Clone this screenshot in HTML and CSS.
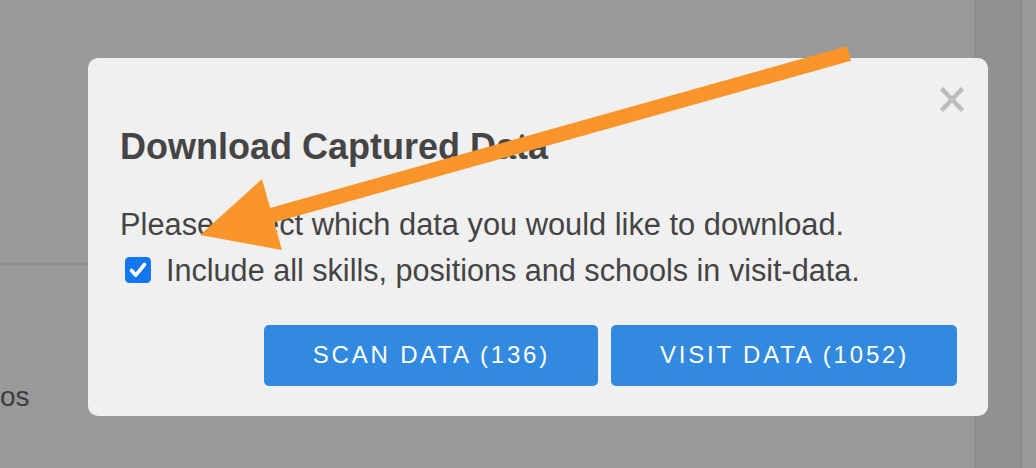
FILE: index.html
```html
<!DOCTYPE html>
<html lang="en">
<head>
<meta charset="utf-8">
<title>Download Captured Data</title>
<link rel="stylesheet" href="styles.css">
</head>
<body>
  <div class="page">
    <div class="main">
      <div class="main-top"></div>
      <div class="main-row"><span class="row-text">os</span></div>
    </div>
    <div class="side"></div>
    <div class="edge"></div>
  </div>

  <div class="overlay">
    <div class="modal" role="dialog">
      <button class="close" aria-label="Close">
        <svg width="26" height="27" viewBox="0 0 26 27"><path d="M2.5 2.5 L23.5 24.5 M23.5 2.5 L2.5 24.5" stroke="#bdbdbd" stroke-width="4.6" fill="none"/></svg>
      </button>
      <h2 class="title">Download Captured Data</h2>
      <p class="lead">Please select which data you would like to download.</p>
      <label class="check">
        <span class="box">
          <svg width="26" height="26" viewBox="0 0 26 26"><rect x="0" y="0" width="26" height="26" rx="4.5" fill="#1276f0"/><path d="M6.5 13.5 L10.8 18.2 L19.5 7.5" stroke="#fff" stroke-width="3.6" fill="none" stroke-linecap="round" stroke-linejoin="round"/></svg>
        </span>
        <span class="check-text">Include all skills, positions and schools in visit-data.</span>
      </label>
      <div class="actions">
        <button class="btn">SCAN DATA (136)</button>
        <button class="btn">VISIT DATA (1052)</button>
      </div>
    </div>
  </div>

  <svg class="annot" width="1036" height="468" viewBox="0 0 1036 468">
    <line x1="849" y1="53.5" x2="262" y2="218" stroke="#f9952a" stroke-width="15"/>
    <polygon points="200,235 262,179 282,250" fill="#f9952a"/>
  </svg>
</body>
</html>
```
FILE: styles.css
```css
html, body {
  margin: 0;
  padding: 0;
  width: 1036px;
  height: 468px;
  overflow: hidden;
  background: #999999;
  font-family: "Liberation Sans", Arial, sans-serif;
}

.page {
  display: flex;
  height: 468px;
}

.main {
  width: 974px;
  border-right: 2px solid #8d8d8d;
  background: #999999;
}

.main-top {
  height: 263px;
  border-bottom: 2px solid #8f8f8f;
}

.main-row {
  padding-top: 115px;
  font-size: 28px;
  line-height: 34px;
  color: #3d3d3d;
}

.row-text {
  margin-left: 0;
}

.side {
  width: 44px;
  background: #929190;
  border-right: 2px solid #8b8b8b;
}

.edge {
  flex: 1;
  background: #999999;
}

.overlay {
  position: fixed;
  inset: 0;
  padding: 58px 0 0 88px;
}

.modal {
  position: relative;
  box-sizing: border-box;
  width: 900px;
  height: 358px;
  background: #f0f0f0;
  border-radius: 10px;
  padding: 71px 31px 30px 32px;
  color: #444444;
}

.close {
  position: absolute;
  left: 851px;
  top: 28px;
  padding: 0;
  margin: 0;
  border: 0;
  background: none;
  width: 26px;
  height: 27px;
  display: block;
}

.close svg {
  display: block;
}

.title {
  margin: 0;
  font-size: 36px;
  line-height: 36px;
  font-weight: bold;
  color: #454545;
}

.lead {
  margin: 41.5px 0 0 0;
  font-size: 30.8px;
  line-height: 36px;
}

.check {
  margin-top: 9px;
  display: flex;
  align-items: center;
  gap: 15px;
  font-size: 30.6px;
  line-height: 36px;
}

.box {
  margin-left: 5px;
  width: 26px;
  height: 26px;
  display: block;
}

.box svg {
  display: block;
}

.actions {
  margin-top: 37px;
  display: flex;
  justify-content: flex-end;
  gap: 13px;
}

.btn {
  height: 61px;
  padding: 0 48px 0 49px;
  border: 0;
  border-radius: 5px;
  background: #3289e0;
  color: #ffffff;
  font-family: "Liberation Sans", Arial, sans-serif;
  font-size: 24px;
  letter-spacing: 2.8px;
}

.annot {
  position: absolute;
  left: 0;
  top: 0;
  pointer-events: none;
}
```
